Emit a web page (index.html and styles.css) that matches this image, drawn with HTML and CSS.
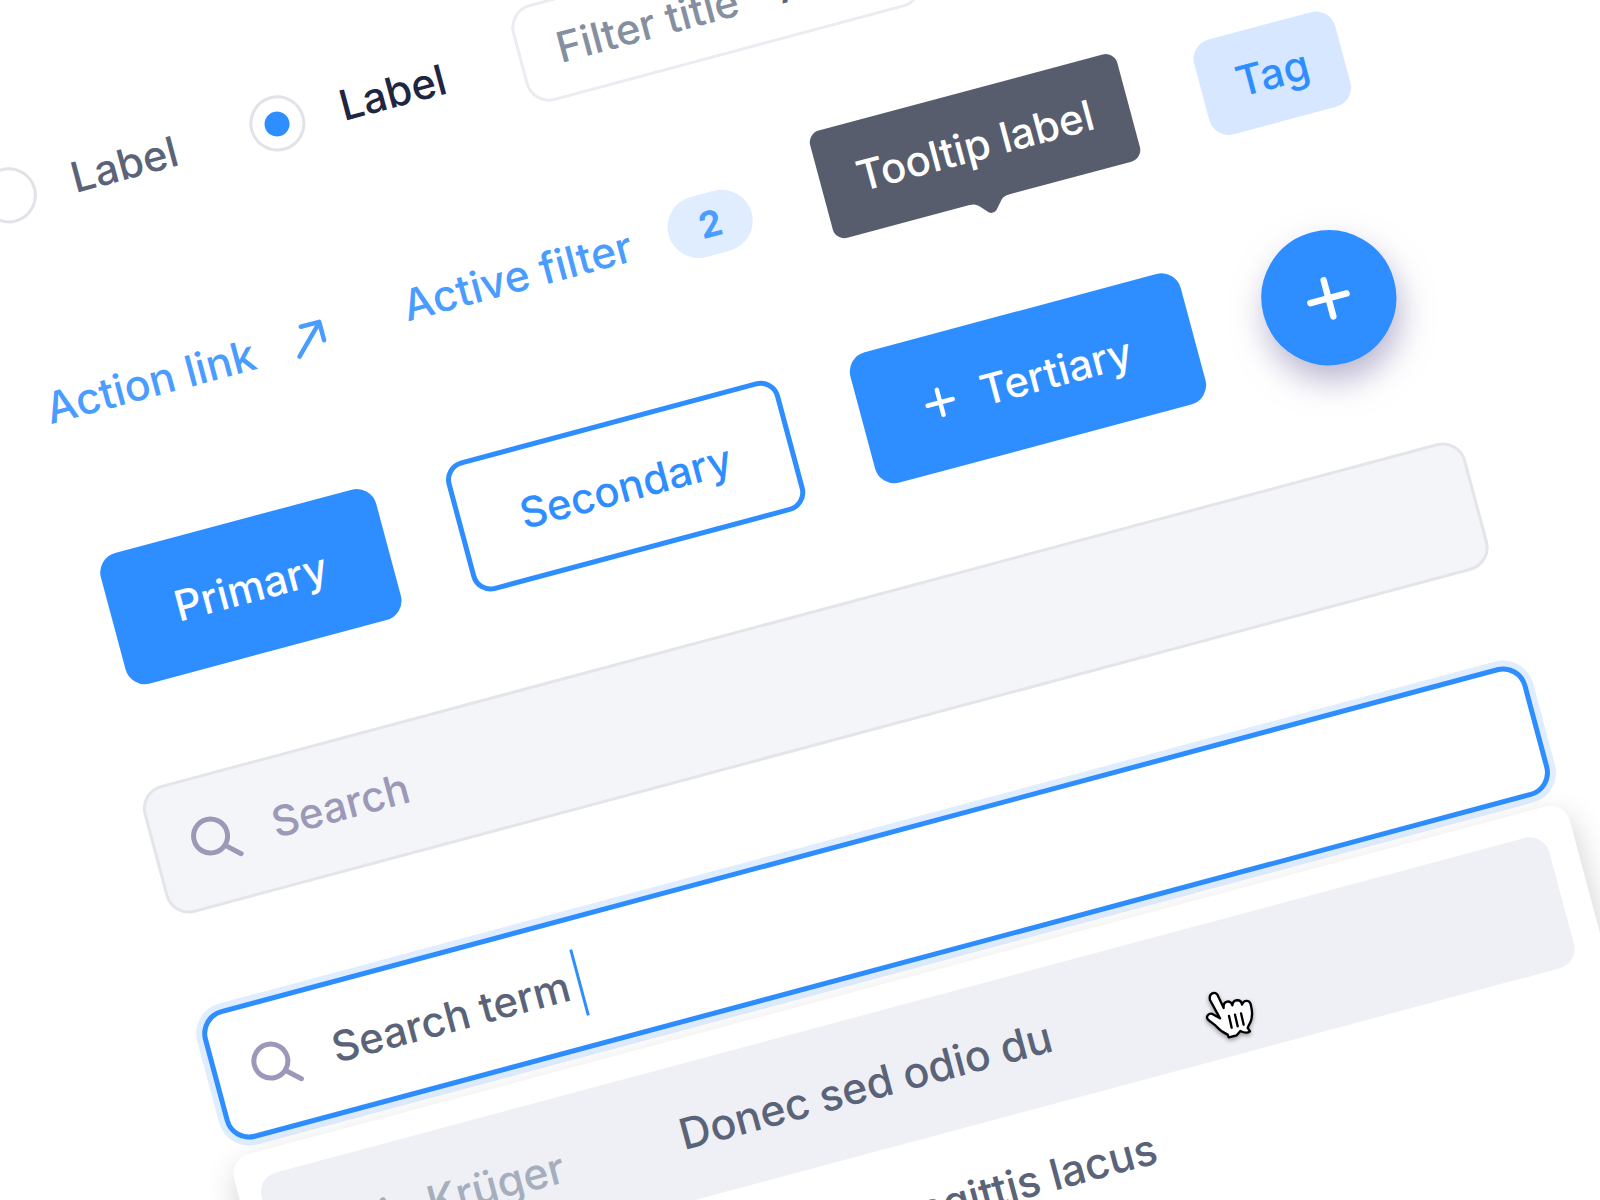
FILE: index.html
```
<!DOCTYPE html>
<html lang="en">
<head>
  <meta charset="UTF-8" />
  <meta name="viewport" content="width=device-width, initial-scale=1.0"/>
  <title>UI Components</title>
  <link rel="stylesheet" href="styles.css">
</head>
<body>
  <main class="board">
    <div class="row filters">
      <label class="radio">
        <input type="radio" name="choice" />
        <span>Label</span>
      </label>
      <label class="radio">
        <input type="radio" name="choice" checked />
        <span>Label</span>
      </label>
      <button class="filter">Filter title <span class="filter-value">All</span></button>
    </div>

    <div class="row links">
      <a class="link" href="#">Action link
        <svg class="arrow" viewBox="0 0 36 36"><path d="M4 33 32 5M13 4.500h19v19"/></svg>
      </a>
      <a class="link active" href="#">Active filter <span class="count">2</span></a>
      <div class="tooltip" role="tooltip">Tooltip label
        <svg class="tip" viewBox="0 0 40 15"><path d="M0 0V1C5 1 7 3 9 5L16 13Q20 16 24 13L31 5C33 3 35 1 40 1V0Z"/></svg>
      </div>
      <span class="tag">Tag</span>
    </div>

    <div class="row buttons">
      <button class="btn">Primary</button>
      <button class="btn secondary">Secondary</button>
      <button class="btn tertiary">
        <svg class="plus" viewBox="0 0 32 32"><path d="M16 3v26M3 16h26"/></svg>
        Tertiary
      </button>
      <button class="btn round" aria-label="Add">
        <svg class="plus big" viewBox="0 0 32 32"><path d="M16 3v26M3 16h26"/></svg>
      </button>
    </div>

    <div class="search">
      <svg class="glass" viewBox="0 0 48 48"><circle cx="20" cy="20" r="17"/><path d="M33 34 45 45"/></svg>
      <input type="text" placeholder="Search" aria-label="Search" />
    </div>

    <div class="search focused">
      <svg class="glass" viewBox="0 0 48 48"><circle cx="20" cy="20" r="17"/><path d="M33 34 45 45"/></svg>
      <input type="text" value="Search term" aria-label="Search term" />
      <span class="caret"></span>
    </div>

    <ul class="results">
      <li class="result hover">
        <span class="author">Martin Krüger</span>
        <span>Donec sed odio du</span>
        <svg class="hand" viewBox="0 0 240 240">
          <path d="M61 74C56 54 77 46 84 60L102 98C99 76 124 72 128 90C130 70 154 70 157 88C162 72 182 72 184 92C190 115 187 135 177 150L174 158 181 168C174 174 162 172 152 167L141 180 117 186 114 178C96 170 86 160 78 151L56 134C46 124 58 109 72 118L91 129Z"/>
          <path d="M118 122 126 157M136 118 144 153M154 114 162 148"/>
        </svg>
      </li>
      <li class="result"><span class="author">Anna Keller</span><span>Vivamus sagittis lacus</span></li>
      <li class="result"><span class="author">Jonas Weber</span><span>Nulla vitae elit libero</span></li>
      <li class="result"><span class="author">Lena Fischer</span><span>Cras mattis purus</span></li>
    </ul>
  </main>
</body>
</html>
```
FILE: styles.css
```
* {
  box-sizing: border-box;
}
body {
  margin: 0;
  height: 100vh;
  overflow: hidden;
  background: #fff;
  font-family: Inter, sans-serif;
  font-size: 42px;
  font-weight: 500;
  line-height: 54px;
  color: #5a6378;
}
/* whole sheet is tilted around the top left corner */
.board {
  width: 86%;
  margin-left: -79px;
  padding-top: 141px;
  transform: rotate(-15deg);
  transform-origin: 79px 0;
  white-space: nowrap;
}
input, button {
  font: inherit;
  color: inherit;
}
button {
  cursor: pointer;
}
.row {
  display: flex;
  align-items: center;
}
.row > * {
  flex-shrink: 0;
}

.filters {
  margin-left: 9px;
  gap: 76px;
}
.radio {
  display: flex;
  align-items: center;
  gap: 37px;
}
.radio input {
  appearance: none;
  display: grid;
  place-items: center;
  width: 56px;
  height: 56px;
  margin: 0;
  border: 3px solid #e2e3e8;
  border-radius: 50%;
}
.radio input:checked::before {
  content: "";
  width: 25px;
  height: 25px;
  border-radius: 50%;
  background: #2e8eff;
}
.radio input:checked + span {
  color: #20263f;
}
.filter {
  width: 409px;
  height: 100px;
  padding: 0 37px;
  border: 3px solid #ebecf1;
  border-radius: 24px;
  background: #fff;
  color: #858f9f;
  text-align: left;
}
.filter-value {
  margin-left: 30px;
  color: #5a6378;
}

.links {
  margin: 97px 0 0 18px;
  align-items: flex-end;
}
.link {
  display: flex;
  align-items: center;
  gap: 39px;
  margin-bottom: 15px;
  color: #4a9dff;
  font-size: 43px;
  text-decoration: none;
}
.link.active {
  margin: 0 74px 18px 81px;
}
.arrow {
  width: 36px;
  height: 36px;
  fill: none;
  stroke: currentColor;
  stroke-width: 4.5;
  stroke-linecap: round;
  stroke-linejoin: round;
}
.count {
  width: 86px;
  border-radius: 31px;
  background: #e0edff;
  font-size: 36px;
  font-weight: 700;
  line-height: 62px;
  text-align: center;
}
.tooltip {
  position: relative;
  padding: 28px 37px 29px;
  border-radius: 12px;
  background: #585d6e;
  color: #fff;
}
.tip {
  position: absolute;
  bottom: -14px;
  left: 50%;
  width: 40px;
  height: 15px;
  margin-left: -20px;
  fill: #585d6e;
}
.tag {
  margin-left: 74px;
  padding: 22px 36px;
  border-radius: 20px;
  background: #d6e7ff;
  color: #2e8eff;
}

.buttons {
  margin: 115px 0 0 27px;
  gap: 73px;
}
.btn {
  display: flex;
  align-items: center;
  justify-content: center;
  gap: 26px;
  height: 135px;
  padding: 0 59px;
  border: 5px solid #2e8eff;
  border-radius: 20px;
  background: #2e8eff;
  color: #fff;
}
.btn.secondary {
  background: #fff;
  color: #2e8eff;
}
.btn.round {
  width: 135px;
  padding: 0;
  border-radius: 50%;
  box-shadow: 0 16px 32px #8a84b099;
}
.plus {
  width: 32px;
  height: 32px;
  fill: none;
  stroke: #fff;
  stroke-width: 4.5;
  stroke-linecap: round;
}
.plus.big {
  width: 46px;
  height: 46px;
}

.search {
  display: flex;
  align-items: center;
  height: 132px;
  margin: 101px 0 0 7px;
  padding: 0 36px;
  border: 3px solid #e4e5ea;
  border-radius: 24px;
  background: #f4f5f8;
}
.search input {
  width: 254px;
  margin-left: 35px;
  padding: 0;
  border: none;
  outline: none;
  background: none;
}
.search input::placeholder {
  color: #9b98b8;
  opacity: 1;
}
.search.focused {
  padding: 0 35px;
  border: 4px solid #2e8eff;
  background: #fff;
  box-shadow: 0 0 0 1px #2e8eff, 0 0 0 7px #e0edff;
}
.glass {
  width: 48px;
  height: 48px;
  fill: none;
  stroke: #9b98b8;
  stroke-width: 5;
  stroke-linecap: round;
}
.caret {
  width: 3px;
  height: 68px;
  background: #2e8eff;
}

.results {
  margin: 14px -7px 0 0;
  padding: 25px 28px 25px 22px;
  border-radius: 20px;
  background: #fff;
  box-shadow: 0 12px 32px #00000030;
  list-style: none;
}
.result {
  position: relative;
  display: flex;
  align-items: center;
  height: 135px;
  padding-left: 15px;
  border-radius: 20px;
  font-size: 43px;
}
.result.hover {
  background: #eff0f5;
}
.author {
  width: 405px;
  color: #a5aebc;
}
/* pointer over the hovered result */
.hand {
  position: absolute;
  top: 55px;
  left: 942px;
  width: 80px;
  height: 80px;
  transform: rotate(15deg);
  fill: #fff;
  stroke: #000;
  stroke-width: 7;
  stroke-linecap: round;
  stroke-linejoin: round;
  filter: drop-shadow(0 2px 2px #00000060);
}
```
